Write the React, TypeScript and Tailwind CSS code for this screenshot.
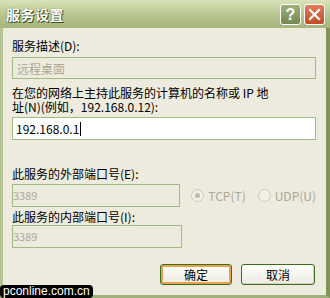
const font = "font-['SimSun','Noto_Sans_CJK_SC',sans-serif]";

function Radio({ checked, label }: { checked?: boolean; label: string }) {
  return (
    <div className="flex items-center gap-[4px]">
      <span className="flex h-[13px] w-[13px] items-center justify-center rounded-full border border-[#cac8bb] bg-[#f1f0e6]">
        {checked && <span className="h-[5px] w-[5px] rounded-full bg-[#bdbcad]" />}
      </span>
      <span className="text-[12px] leading-[13px] text-[#aca899]">{label}</span>
    </div>
  );
}

function XpButton({ label, primary }: { label: string; primary?: boolean }) {
  return (
    <button
      className={`flex h-[21px] items-center justify-center rounded-[3px] border border-[#3e6c1e] bg-gradient-to-b from-[#fffffb] to-[#ecebe3] text-[12px] text-black ${
        primary ? 'w-[72px] shadow-[inset_0_0_0_2px_#e8a24d]' : 'w-[74px] shadow-[inset_-1px_-1px_0_#d6d0c5]'
      }`}
    >
      {label}
    </button>
  );
}

export default function App() {
  return (
    <div className={`relative flex h-[298px] w-[330px] flex-col overflow-hidden bg-[#b6c495] ${font}`}>
      {/* title bar */}
      <div className="flex h-[28px] items-center justify-between bg-gradient-to-b from-[#d9e2b9] via-[#bac891] to-[#a4b47a] pl-[6px] pr-[5px]">
        <span className="text-[14px] font-bold tracking-[0.5px] text-white [text-shadow:1px_1px_0_#3f4c22,0_0_1px_#3f4c22]">服务设置</span>
        <div className="flex gap-[3px] pt-[1px]">
          <span className="flex h-[21px] w-[21px] items-center justify-center rounded-[3px] border border-white bg-gradient-to-b from-[#9fb07a] to-[#76884f] text-[16px] font-bold leading-none text-white font-['Liberation_Sans',sans-serif]">
            ?
          </span>
          <span className="flex h-[21px] w-[21px] items-center justify-center rounded-[3px] border border-white bg-gradient-to-b from-[#e27c5a] to-[#c24a24]">
            <svg width="13" height="13" viewBox="0 0 13 13">
              <path d="M2 2 L11 11 M11 2 L2 11" stroke="white" strokeWidth="2.2" strokeLinecap="square" />
            </svg>
          </span>
        </div>
      </div>

      {/* body */}
      <div className="flex flex-1 flex-col border-b-[3px] border-l-[3px] border-r-[4px] border-b-[#9fb07a] border-l-[#b3c394] border-r-[#7f9457] bg-[#ecebdd] pl-[9px] pr-[10px] text-[12px] leading-[13px] text-black">
        <div className="mt-[11px]">服务描述(D):</div>
        <div className="mt-[5px] flex h-[22px] items-center border border-[#a3bb81] px-[4px] text-[#aca899]">远程桌面</div>

        <div className="mt-[7px] flex flex-col gap-[1px]">
          <div>在您的网络上主持此服务的计算机的名称或 IP 地</div>
          <div>址(N)(例如，192.168.0.12):</div>
        </div>
        <div className="mt-[4px] flex h-[23px] items-center border border-[#a3bb81] bg-white px-[3px]">
          192.168.0.1<span className="ml-[1px] h-[14px] w-[1px] bg-black" />
        </div>

        <div className="mt-[27px]">此服务的外部端口号(E):</div>
        <div className="mt-[4px] flex items-center">
          <div className="flex h-[23px] w-[170px] items-center border border-[#a3bb81] text-[11px] text-[#aca899]">3389</div>
          <div className="ml-[11px] flex gap-[12px]">
            <Radio checked label="TCP(T)" />
            <Radio label="UDP(U)" />
          </div>
        </div>
        <div className="mt-[3px]">此服务的内部端口号(I):</div>
        <div className="mt-[2px] flex h-[23px] w-[170px] items-center border border-[#a3bb81] text-[11px] text-[#aca899]">3389</div>

        <div className="mt-[16px] flex justify-end gap-[9px] pr-[1px]">
          <XpButton primary label="确定" />
          <XpButton label="取消" />
        </div>
      </div>

      {/* watermark */}
      <div className="absolute bottom-[0px] left-[0px] rounded-[4px] bg-black px-[3px] text-[12px] leading-[13px] text-white font-['Liberation_Sans',sans-serif]">
        pconline.com.cn
      </div>
    </div>
  );
}
